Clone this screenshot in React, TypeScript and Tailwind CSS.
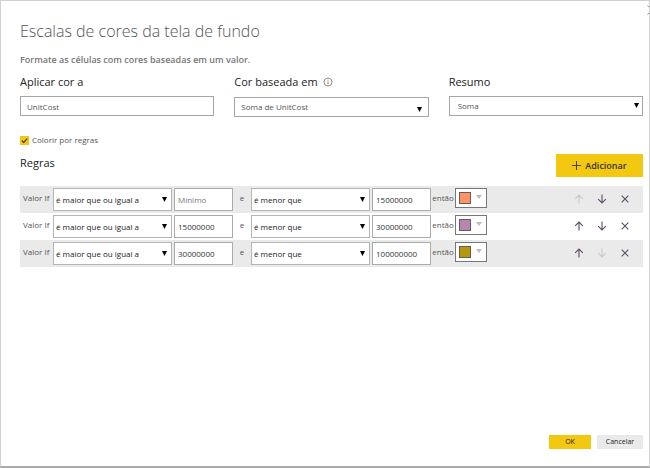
import { useId, useState } from "react";
import type { ReactNode } from "react";

type Rule = { min: string; max: string; color: string };

const initialRules: Rule[] = [
  { min: "", max: "15000000", color: "#fd9465" },
  { min: "15000000", max: "30000000", color: "#b887ad" },
  { min: "30000000", max: "100000000", color: "#b7970b" },
];

function Caret({ className }: { className: string }) {
  return (
    <svg viewBox="0 0 5 5" className={`pointer-events-none absolute h-[5px] w-[5px] ${className}`} aria-hidden="true">
      <path d="M0 0H5L2.5 5Z" fill="currentColor" />
    </svg>
  );
}

function RuleSelect({ label, options }: { label: string; options: string[] }) {
  return (
    <div className="relative w-[119px] shrink-0">
      <select
        aria-label={label}
        className="block h-[23px] w-full appearance-none border border-[#b5b5b5] bg-white pl-[2px] pt-px text-[8px] text-[#222]"
      >
        {options.map((o) => (
          <option key={o}>{o}</option>
        ))}
      </select>
      <Caret className="right-[5px] top-[9px] text-black" />
    </div>
  );
}

function Field({ label, info, children }: { label: string; info?: boolean; children: (id: string) => ReactNode }) {
  const id = useId();
  return (
    <div className="flex min-w-0 flex-col gap-[6px]">
      <div className="flex h-4 items-center gap-[5px]">
        <label htmlFor={id} className="text-[11px] leading-4 text-[#222]">
          {label}
        </label>
        {info && (
          <svg viewBox="0 0 10 10" className="h-[10px] w-[10px]" fill="none" aria-hidden="true">
            <circle cx="5" cy="5" r="4" stroke="#8a7f78" strokeWidth="0.9" />
            <path d="M5 4.4V7.2M5 2.6V3.5" stroke="#c07840" strokeWidth="1" />
          </svg>
        )}
      </div>
      {children(id)}
    </div>
  );
}

function Arrow({ down }: { down?: boolean }) {
  return (
    <svg viewBox="0 0 10 10" className={`h-[10px] w-[10px] ${down ? "rotate-180" : ""}`} fill="none" stroke="currentColor" strokeWidth="1.1" aria-hidden="true">
      <path d="M5 9.5V1M1.2 4.8L5 1L8.8 4.8" />
    </svg>
  );
}

const iconButton = "flex h-[23px] w-[23px] items-center justify-center text-[#5f4b66] disabled:text-[#c9c9c9]";
const valueInput =
  "ml-[2px] h-[23px] w-[59px] shrink-0 border border-[#ababab] bg-white px-[3px] text-[8px] text-[#333] placeholder:text-[#777]";

function RuleRow({ rule, first, last }: { rule: Rule; first: boolean; last: boolean }) {
  return (
    <li className="flex h-[27px] items-center pl-[3px] pr-[7px] text-[8px] leading-3 text-[#555] odd:bg-[#eaeaea]">
      <span className="w-[30px] shrink-0 pb-1">Valor If</span>
      <RuleSelect label="Operador mínimo" options={["é maior que ou igual a", "é maior que"]} />
      <input aria-label="Valor mínimo" defaultValue={rule.min} placeholder="Mínimo" className={valueInput} />
      <span className="w-[18px] shrink-0 pb-1 text-center">e</span>
      <RuleSelect label="Operador máximo" options={["é menor que", "é menor que ou igual a"]} />
      <input aria-label="Valor máximo" defaultValue={rule.max} className={valueInput} />
      <span className="w-[24px] shrink-0 pb-1 text-center">então</span>
      <button
        type="button"
        aria-label="Cor"
        className="mb-[3px] flex h-5 w-8 shrink-0 items-start justify-between border border-[#777] bg-white py-[3px] pl-[3px] pr-1"
      >
        <span className="h-3 w-3 border border-[#6b5a55]" style={{ backgroundColor: rule.color }} />
        <svg viewBox="0 0 6 4" className="mt-[3px] h-1 w-[6px]" aria-hidden="true">
          <path d="M0 0H6L3 4Z" fill="#bcbcbc" />
        </svg>
      </button>
      <div className="mb-[2px] ml-auto flex">
        <button type="button" aria-label="Mover para cima" disabled={first} className={iconButton}>
          <Arrow />
        </button>
        <button type="button" aria-label="Mover para baixo" disabled={last} className={iconButton}>
          <Arrow down />
        </button>
        <button type="button" aria-label="Excluir" className={iconButton}>
          <svg viewBox="0 0 8 8" className="h-2 w-2" fill="none" stroke="currentColor" strokeWidth="1.1" aria-hidden="true">
            <path d="M0.7 0.7L7.3 7.3M7.3 0.7L0.7 7.3" />
          </svg>
        </button>
      </div>
    </li>
  );
}

export default function App() {
  const [byRules, setByRules] = useState(true);
  const box = "block h-5 w-full border border-[#a6a6a6] bg-white text-[8px] text-[#555]";
  return (
    <main className="relative flex min-h-screen flex-col overflow-hidden border border-b-2 border-[#d0d0d0] border-b-[#aaa] bg-white pb-[17px] pl-[19px] pr-[6px] pt-[18px] font-['Open_Sans','Noto_Sans',sans-serif]">
      <button type="button" aria-label="Fechar" className="absolute -right-2 top-1 h-[10px] w-[10px] text-[#888]">
        <svg viewBox="0 0 10 10" className="h-[10px] w-[10px]" fill="none" stroke="currentColor" aria-hidden="true">
          <path d="M0.5 0.5L9.5 9.5M9.5 0.5L0.5 9.5" />
        </svg>
      </button>

      <h1 className="text-[16px] font-light leading-6 text-[#555]">Escalas de cores da tela de fundo</h1>
      <p className="mt-[9px] text-[9px] font-semibold leading-4 text-[#777]">
        Formate as células com cores baseadas em um valor.
      </p>

      <div className="mt-[6px] grid grid-cols-3 items-start gap-5">
        <Field label="Aplicar cor a">
          {(id) => <input id={id} defaultValue="UnitCost" className={`${box} px-[6px]`} />}
        </Field>
        <Field label="Cor baseada em" info>
          {(id) => (
            <div className="relative pt-px">
              <select id={id} className={`${box} appearance-none px-[6px]`}>
                <option>Soma de UnitCost</option>
              </select>
              <Caret className="right-[7px] top-[11px] text-black" />
            </div>
          )}
        </Field>
        <Field label="Resumo">
          {(id) => (
            <div className="relative">
              <select id={id} className={`${box} appearance-none px-2`}>
                <option>Soma</option>
              </select>
              <Caret className="right-[4px] top-[7px] text-black" />
            </div>
          )}
        </Field>
      </div>

      <label className="mt-[15px] flex items-center gap-[3px] self-start text-[8px] leading-4 text-[#555]">
        <span className="relative flex h-[9px] w-[9px]">
          <input
            type="checkbox"
            checked={byRules}
            onChange={(e) => setByRules(e.target.checked)}
            className="h-[9px] w-[9px] appearance-none border border-[#f2c811] checked:bg-[#f2c811]"
          />
          {byRules && (
            <svg viewBox="0 0 9 9" className="pointer-events-none absolute inset-0 h-[9px] w-[9px]" fill="none" aria-hidden="true">
              <path d="M1.8 4.6L3.7 6.4L7.3 2.7" stroke="#333" strokeWidth="1.2" />
            </svg>
          )}
        </span>
        Colorir por regras
      </label>

      <div className="mt-[6px] flex items-start justify-between">
        <h2 className="pt-px text-[11px] leading-4 text-[#222]">Regras</h2>
        <button
          type="button"
          className="flex h-[23px] w-[87px] items-center justify-center gap-1 bg-[#f2c811] text-[9px] font-semibold text-[#333]"
        >
          <svg viewBox="0 0 9 9" className="h-[9px] w-[9px]" stroke="#444" aria-hidden="true">
            <path d="M4.5 0V9M0 4.5H9" />
          </svg>
          Adicionar
        </button>
      </div>

      <ul className="mt-[9px]">
        {initialRules.map((rule, i) => (
          <RuleRow key={rule.color} rule={rule} first={i === 0} last={i === initialRules.length - 1} />
        ))}
      </ul>

      <div className="mt-auto flex justify-end gap-[6px] text-[7px] text-[#222]">
        <button type="button" className="h-[14px] w-[42px] bg-[#f2c811]">
          OK
        </button>
        <button type="button" className="h-[14px] w-[46px] bg-[#eaeaea]">
          Cancelar
        </button>
      </div>
    </main>
  );
}
